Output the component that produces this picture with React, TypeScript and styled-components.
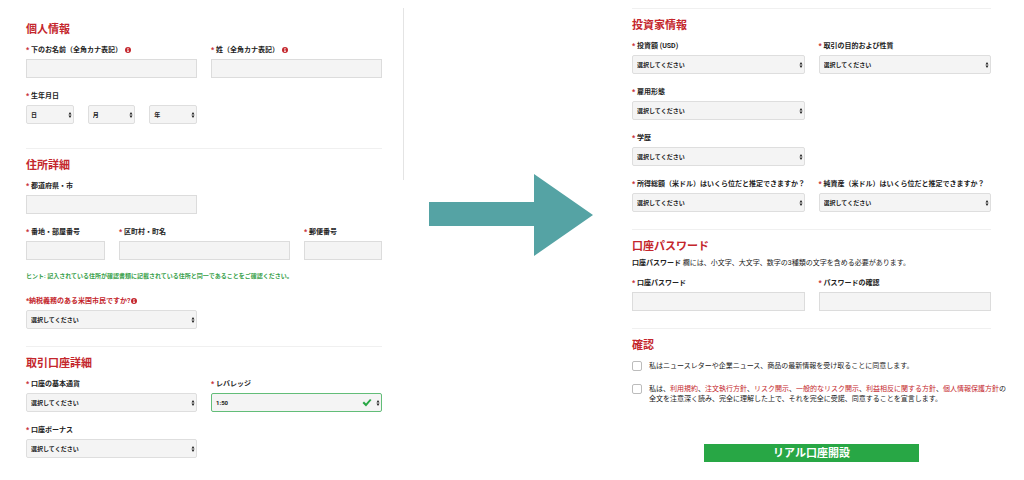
import React, { useId } from "react";
import styled, { createGlobalStyle } from "styled-components";

const GlobalStyle = createGlobalStyle`
  *, *::before, *::after { box-sizing: border-box; }
  body {
    margin: 0;
    background: #fff;
    color: #222;
    font-family: Roboto, "Noto Sans CJK JP", sans-serif;
    font-size: 7px;
    line-height: 12px;
  }
`;

const red = "#c4262c";
const green = "#28a745";

const Page = styled.main`
  display: grid;
  grid-template-columns: 377fr 1px 189fr 398fr;
  padding: 0 33px 17px 26px;
`;

const LeftColumn = styled.div`
  min-width: 0;
  padding: 22px 21px 0 0;
`;

const RightColumn = styled.div`
  min-width: 0;
  padding: 8px 0 0 39px;
`;

const SideRule = styled.div`
  height: 172px;
  margin-top: 8px;
  background: #e4e4e4;
`;

const ArrowArea = styled.div`
  padding: 174px 0 0 25px;
`;

const Arrow = styled.svg`
  display: block;
  width: 100%;
  height: auto;
`;

const Section = styled.section<{ $ruled?: boolean; $after?: number }>`
  border-top: ${(p) => (p.$ruled ? "1px solid #f0f0f0" : "0")};
  padding-top: ${(p) => (p.$ruled ? 9 : 0)}px;
  margin-bottom: ${(p) => p.$after ?? 17}px;
`;

const Title = styled.h2`
  margin: 0 0 6px;
  font-size: 11px;
  line-height: 16px;
  font-weight: 700;
  color: ${red};
`;

const FieldGrid = styled.div<{ $columns?: string; $top?: number }>`
  display: grid;
  grid-template-columns: ${(p) => p.$columns ?? "1fr 1fr"};
  gap: 12px 14px;
  margin-top: ${(p) => p.$top ?? 0}px;
`;

const Field = styled.div<{ $firstColumn?: boolean }>`
  display: flex;
  flex-direction: column;
  gap: 3px;
  min-width: 0;
  ${(p) => p.$firstColumn && "grid-column: 1;"}
`;

const Label = styled.label<{ $alert?: boolean }>`
  display: flex;
  align-items: center;
  height: 12px;
  font-weight: 700;
  white-space: nowrap;
  color: ${(p) => (p.$alert ? red : "#222")};
`;

const Star = styled.span<{ $tight?: boolean }>`
  flex: none;
  color: ${red};
  width: ${(p) => (p.$tight ? "3px" : "5px")};
`;

const TextBox = styled.input`
  width: 100%;
  height: 19px;
  padding: 0 4px;
  border: 1px solid #dcdcdc;
  border-radius: 0;
  background: #f4f4f4;
  font: inherit;
`;

const SelectShell = styled.div`
  position: relative;
  height: 19px;
`;

const SelectBox = styled.select<{ $valid?: boolean }>`
  display: block;
  appearance: none;
  width: 100%;
  height: 19px;
  padding: 0 10px 0 4px;
  border: 1px solid ${(p) => (p.$valid ? "#62bd78" : "#dedede")};
  border-radius: 2px;
  background: #f4f4f4;
  color: #222;
  font-family: inherit;
  font-size: 6px;
  font-weight: 700;
`;

const Chevrons = styled.svg`
  position: absolute;
  right: 2px;
  top: 7px;
  pointer-events: none;
`;

const Tick = styled.svg`
  position: absolute;
  right: 10px;
  top: 5px;
  pointer-events: none;
`;

const InfoSvg = styled.svg<{ $tight?: boolean }>`
  flex: none;
  margin-left: ${(p) => (p.$tight ? 1 : 3)}px;
`;

const Hint = styled.p`
  margin: 10px 0 0;
  font-size: 6px;
  font-weight: 700;
  color: #37a04a;
`;

const Note = styled.p`
  margin: -4px 0 8px;
  white-space: nowrap;
`;

const ConsentList = styled.div`
  display: grid;
  gap: 13px;
  padding-top: 1px;
`;

const Consent = styled.div`
  display: flex;
  gap: 7px;
  line-height: 10px;
  white-space: nowrap;
`;

const CheckBox = styled.input`
  appearance: none;
  flex: none;
  width: 10px;
  height: 10px;
  margin: 0;
  border: 1px solid #bcbcbc;
  border-radius: 2px;
  background: #fff;
`;

const TermsLink = styled.a`
  color: ${red};
  text-decoration: none;
`;

const Submit = styled.button`
  display: block;
  width: 60%;
  height: 18px;
  margin: 40px auto 0;
  padding: 1px 0 0;
  border: 0;
  background: ${green};
  color: #fff;
  font-family: inherit;
  font-size: 11px;
  line-height: 17px;
  font-weight: 700;
`;

function InfoIcon({ tight }: { tight?: boolean }) {
  return (
    <InfoSvg $tight={tight} width="6" height="6" viewBox="0 0 12 12" aria-hidden="true">
      <circle cx="6" cy="6" r="6" fill={red} />
      <path d="M5 2h2v2H5zM4 5h3v4h1v1H4V9h1V6H4z" fill="#fff" />
    </InfoSvg>
  );
}

function Picker({
  id,
  text = "選択してください",
  valid,
  name,
}: {
  id?: string;
  text?: string;
  valid?: boolean;
  name?: string;
}) {
  return (
    <SelectShell>
      <SelectBox id={id} $valid={valid} aria-label={name}>
        <option>{text}</option>
      </SelectBox>
      {valid && (
        <Tick width="10" height="9" viewBox="0 0 20 18" aria-hidden="true">
          <path d="M1 10l3-3 4 4L16 2l3 2L8 17z" fill={green} />
        </Tick>
      )}
      <Chevrons width="4" height="6" viewBox="0 0 8 12" aria-hidden="true">
        <path d="M4 0l3 5H1zM4 12L1 7h6z" fill="#222" />
      </Chevrons>
    </SelectShell>
  );
}

type FieldProps = {
  label: string;
  info?: boolean;
  firstColumn?: boolean;
  alert?: boolean;
  text?: string;
  valid?: boolean;
  type?: string;
};

function InputField({ label, info, firstColumn, type = "text" }: FieldProps) {
  const id = useId();
  return (
    <Field $firstColumn={firstColumn}>
      <Label htmlFor={id}>
        <Star>*</Star>
        {label}
        {info && <InfoIcon />}
      </Label>
      <TextBox id={id} type={type} />
    </Field>
  );
}

function SelectField({ label, info, firstColumn, alert, text, valid }: FieldProps) {
  const id = useId();
  return (
    <Field $firstColumn={firstColumn}>
      <Label htmlFor={id} $alert={alert}>
        <Star $tight={alert}>*</Star>
        {label}
        {info && <InfoIcon tight />}
      </Label>
      <Picker id={id} text={text} valid={valid} />
    </Field>
  );
}

const terms = [
  "利用規約",
  "注文執行方針",
  "リスク開示",
  "一般的なリスク開示",
  "利益相反に関する方針",
  "個人情報保護方針",
];

export default function App() {
  return (
    <>
      <GlobalStyle />
      <Page lang="ja">
        <LeftColumn>
          <Section $after={24}>
            <Title>個人情報</Title>
            <FieldGrid>
              <InputField label="下のお名前（全角カナ表記）" info />
              <InputField label="姓（全角カナ表記）" info />
              <Field role="group" aria-labelledby="birth">
                <Label as="span" id="birth">
                  <Star>*</Star>
                  生年月日
                </Label>
                <FieldGrid $columns="1fr 1fr 1fr">
                  <Picker text="日" name="日" />
                  <Picker text="月" name="月" />
                  <Picker text="年" name="年" />
                </FieldGrid>
              </Field>
            </FieldGrid>
          </Section>
          <Section $ruled>
            <Title>住所詳細</Title>
            <FieldGrid>
              <InputField label="都道府県・市" />
            </FieldGrid>
            <FieldGrid $columns="79fr 171fr 78fr" $top={12}>
              <InputField label="番地・部屋番号" />
              <InputField label="区町村・町名" />
              <InputField label="郵便番号" />
            </FieldGrid>
            <Hint>
              ヒント: 記入されている住所が確認書類に記載されている住所と同一であることをご確認ください。
            </Hint>
            <FieldGrid $top={13}>
              <SelectField label="納税義務のある米国市民ですか?" alert info />
            </FieldGrid>
          </Section>
          <Section $ruled $after={0}>
            <Title>取引口座詳細</Title>
            <FieldGrid>
              <SelectField label="口座の基本通貨" />
              <SelectField label="レバレッジ" text="1:50" valid />
              <SelectField label="口座ボーナス" />
            </FieldGrid>
          </Section>
        </LeftColumn>

        <SideRule />

        <ArrowArea>
          <Arrow viewBox="0 0 164 82" role="img" aria-label="次へ">
            <path d="M0 28h105V0l59 41-59 41V52H0z" fill="#55a3a4" />
          </Arrow>
        </ArrowArea>

        <RightColumn>
          <Section $ruled>
            <Title>投資家情報</Title>
            <FieldGrid>
              <SelectField label="投資額 (USD)" />
              <SelectField label="取引の目的および性質" />
              <SelectField label="雇用形態" firstColumn />
              <SelectField label="学歴" firstColumn />
              <SelectField label="所得総額（米ドル）はいくら位だと推定できますか？" firstColumn />
              <SelectField label="純資産（米ドル）はいくら位だと推定できますか？" />
            </FieldGrid>
          </Section>
          <Section $ruled>
            <Title>口座パスワード</Title>
            <Note>
              <strong>口座パスワード</strong>{" "}
              欄には、小文字、大文字、数字の3種類の文字を含める必要があります。
            </Note>
            <FieldGrid>
              <InputField label="口座パスワード" type="password" />
              <InputField label="パスワードの確認" type="password" />
            </FieldGrid>
          </Section>
          <Section $ruled $after={0}>
            <Title>確認</Title>
            <ConsentList>
              <Consent>
                <CheckBox type="checkbox" id="news" />
                <label htmlFor="news">
                  私はニュースレターや企業ニュース、商品の最新情報を受け取ることに同意します。
                </label>
              </Consent>
              <Consent>
                <CheckBox type="checkbox" id="terms" />
                <label htmlFor="terms">
                  私は、
                  {terms.map((term, i) => (
                    <React.Fragment key={term}>
                      {i > 0 && "、"}
                      <TermsLink href="#">{term}</TermsLink>
                    </React.Fragment>
                  ))}
                  の
                  <br />
                  全文を注意深く読み、完全に理解した上で、それを完全に受諾、同意することを宣言します。
                </label>
              </Consent>
            </ConsentList>
            <Submit type="submit">リアル口座開設</Submit>
          </Section>
        </RightColumn>
      </Page>
    </>
  );
}
